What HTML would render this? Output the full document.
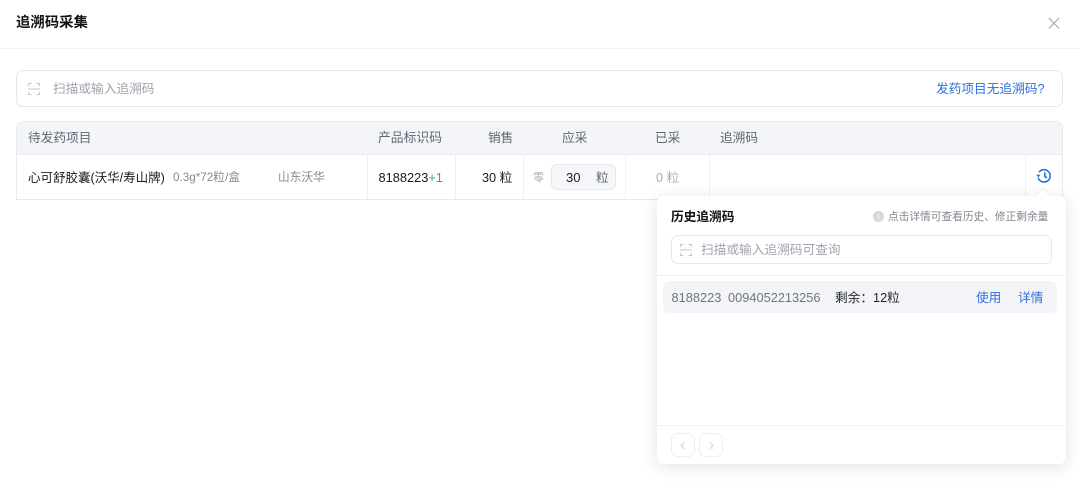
<!DOCTYPE html>
<html lang="zh"><head><meta charset="utf-8"><title>追溯码采集</title>
<style>
html,body{margin:0;padding:0;width:1080px;height:487px;overflow:hidden;background:#fff}
body{position:relative;font-family:"Liberation Sans","Noto Sans CJK SC",sans-serif;font-size:12.7px;color:#1f2329}
.a{position:absolute;white-space:nowrap;line-height:18px}
.b{position:absolute;box-sizing:border-box}
.g{color:#6b7280}.l{color:#a9aeb6}.bl{color:#2f6fdc}
.th{color:#5f6672;top:129px}
.v{position:absolute;width:1px;background:#eef0f4;top:155px;height:44px}
</style></head><body>
<div class="a" style="left:16px;top:14px;font-size:14.4px;font-weight:700;color:#111">追溯码采集</div>
<svg class="b" style="left:1047px;top:16px" width="14" height="14" viewBox="0 0 14 14"><path d="M1.800 2L12.200 12.400M12.200 2L1.800 12.400" stroke="#b0b5bd" stroke-width="1.300" fill="none"/></svg>
<div class="b" style="left:0;top:48px;width:1080px;height:1px;background:#f1f3f6"></div>

<div class="b" style="left:16px;top:70px;width:1047px;height:37px;border:1px solid #e6e8ec;border-radius:7px"></div>
<svg class="b" style="left:28px;top:83px" width="12" height="12" viewBox="0 0 12 12" fill="none" stroke="#c4c7cd" stroke-width="1"><path d="M.5 3V.5H3.500M8.500 .5h3V3M.5 9v2.500H3.500M8.500 11.500h3V9M0 6h12"/></svg>
<div class="a l" style="left:53px;top:79.500px;color:#9fa4ac">扫描或输入追溯码</div>
<div class="a bl" style="left:936px;top:79.500px">发药项目无追溯码?</div>

<div class="b" style="left:16px;top:121px;width:1047px;height:79px;border:1px solid #e8eaee;border-bottom:1px solid #e8eaee;border-radius:7px 7px 0 0;overflow:hidden"><div style="height:33px;background:#f4f5f9"></div></div>
<div class="b" style="left:17px;top:154px;width:1045px;height:1px;background:#eceef2"></div>
<div class="a th" style="left:28px">待发药项目</div>
<div class="a th" style="left:378px;font-size:12.800px">产品标识码</div>
<div class="a th" style="left:488px">销售</div>
<div class="a th" style="left:562px">应采</div>
<div class="a th" style="left:655px">已采</div>
<div class="a th" style="left:720px">追溯码</div>

<div class="v" style="left:367px"></div><div class="v" style="left:455px"></div><div class="v" style="left:523px"></div><div class="v" style="left:625px"></div><div class="v" style="left:709px"></div><div class="v" style="left:1025px"></div>

<div class="a" style="left:28px;top:168.500px;color:#1a1a1a;font-size:12.500px">心可舒胶囊(沃华/寿山牌)</div>
<div class="a" style="left:173px;top:168.500px;font-size:11.700px;color:#858b94">0.3g*72粒/盒</div>
<div class="a" style="left:278px;top:168.500px;font-size:11.700px;color:#858b94">山东沃华</div>
<div class="a" style="left:378.500px;top:168.500px;color:#1a1a1a;font-size:12.800px">8188223<span style="color:#22b864">+1</span></div>
<div class="a" style="left:482px;top:168.500px;color:#1a1a1a">30 粒</div>
<div class="a" style="left:533px;top:168.500px;font-size:11px;color:#a9aeb6">零</div>
<div class="b" style="left:551px;top:164px;width:65px;height:26px;background:#f6f7fa;border:1px solid #e6e8ec;border-radius:6px"></div>
<div class="a" style="left:566px;top:168.500px;color:#1a1a1a;font-size:13px">30</div>
<div class="a" style="left:596px;top:168.500px;color:#5f6672">粒</div>
<div class="a l" style="left:656px;top:168.500px">0 粒</div>
<svg class="b" style="left:1036px;top:168px" width="16" height="16" viewBox="0 0 16 16" fill="none" stroke="#2f6fdc" stroke-width="1.600"><path d="M3 4.200A6.200 6.200 0 1 1 2.100 9.800"/><path d="M8.800 4.200V8.300L11 10"/><path d="M.2 6.600h4.300L2.400 9.400z" fill="#2f6fdc" stroke="none"/></svg>

<div class="b" style="left:657px;top:196px;width:409px;height:268px;background:#fff;border-radius:7px;box-shadow:0 3px 16px rgba(30,40,60,.13)"></div>
<div class="b" style="left:1038px;top:191px;width:10px;height:10px;background:#fff;transform:rotate(45deg);box-shadow:-1px -1px 2px rgba(30,40,60,.08)"></div>
<div class="a" style="left:671px;top:208px;font-weight:700;color:#111;font-size:12.700px">历史追溯码</div>
<div class="b" style="left:873px;top:211px;width:11px;height:11px;border-radius:50%;background:#d5d8dd;color:#fff;font-size:8px;line-height:11px;text-align:center">i</div>
<div class="a" style="left:888px;top:208px;font-size:10.700px;color:#80868f">点击详情可查看历史、修正剩余量</div>
<div class="b" style="left:671px;top:235px;width:381px;height:29px;border:1px solid #e6e8ec;border-radius:7px"></div>
<svg class="b" style="left:680px;top:244px" width="12" height="12" viewBox="0 0 12 12" fill="none" stroke="#c4c7cd" stroke-width="1"><path d="M.5 3V.5H3.500M8.500 .5h3V3M.5 9v2.500H3.500M8.500 11.500h3V9M0 6h12"/></svg>
<div class="a" style="left:701px;top:241px;color:#9fa4ac">扫描或输入追溯码可查询</div>
<div class="b" style="left:657px;top:275px;width:409px;height:1px;background:#eff1f5"></div>
<div class="b" style="left:663px;top:281px;width:394px;height:32px;background:#f3f4f8;border-radius:7px"></div>
<div class="a g" style="left:671.500px;top:288.500px;color:#6f7580;font-size:12.800px">8188223</div>
<div class="a g" style="left:728px;top:288.500px;color:#6f7580;font-size:12.800px">0094052213256</div>
<div class="a" style="left:835px;top:288.500px;color:#1f2329">剩余：12粒</div>
<div class="a bl" style="left:976px;top:288.500px">使用</div>
<div class="a bl" style="left:1018px;top:288.500px">详情</div>
<div class="b" style="left:657px;top:425px;width:409px;height:1px;background:#f1f3f6"></div>
<div class="b" style="left:671px;top:433px;width:24px;height:24px;border:1px solid #eceef1;border-radius:7px"></div>
<div class="b" style="left:699px;top:433px;width:24px;height:24px;border:1px solid #eceef1;border-radius:7px"></div>
<svg class="b" style="left:679px;top:441px" width="8" height="9" viewBox="0 0 8 9" fill="none" stroke="#d3d5de" stroke-width="1.100"><path d="M5.500 1L2 4.500L5.500 8"/></svg>
<svg class="b" style="left:707px;top:441px" width="8" height="9" viewBox="0 0 8 9" fill="none" stroke="#d3d5de" stroke-width="1.100"><path d="M2.500 1L6 4.500L2.500 8"/></svg>
</body></html>
